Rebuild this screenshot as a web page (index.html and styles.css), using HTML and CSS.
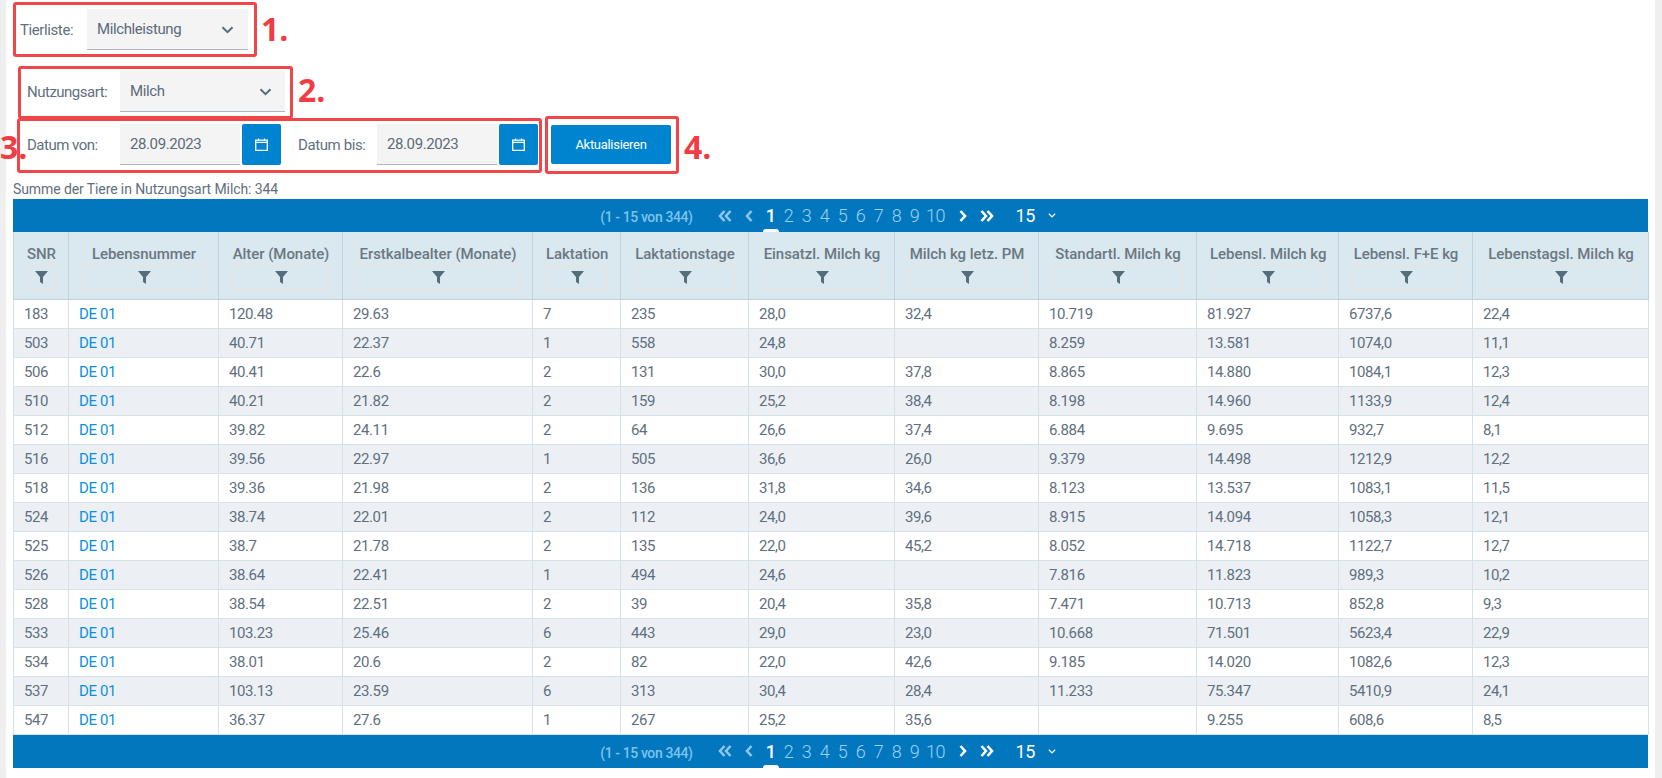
FILE: index.html
```html
<!DOCTYPE html>
<html lang="de">
<head>
    <meta charset="UTF-8">
    <meta name="viewport" content="width=device-width, initial-scale=1.0">
    <title>Tierliste</title>
    <link rel="stylesheet" href="styles.css">
</head>
<body>
    <svg class="sprites" width="0" height="0">
        <symbol id="i-down" viewBox="0 0 12 8"><path d="M1 1.2 6 6.2 11 1.2" fill="none" stroke="currentColor" stroke-width="2"/></symbol>
        <symbol id="i-cal" viewBox="0 0 13 13"><path d="M.7 2.200h11.600v10.100H.7z M.7 4.400h11.600" fill="none" stroke="currentColor" stroke-width="1.300"/><path d="M3.500 .4v2.600 M9.500 .4v2.600" fill="none" stroke="currentColor" stroke-width="1.200"/></symbol>
        <symbol id="i-filter" viewBox="0 0 13 13"><path d="M0 0h13L8 6v7L5 11V6z" fill="currentColor"/></symbol>
        <symbol id="i-first" viewBox="0 0 14 12"><path d="M6.5 1 2 6l4.500 5 M12.500 1 8 6l4.500 5" fill="none" stroke="currentColor" stroke-width="2.600"/></symbol>
        <symbol id="i-prev" viewBox="0 0 8 12"><path d="M6.500 1 2 6l4.500 5" fill="none" stroke="currentColor" stroke-width="2.600"/></symbol>
        <symbol id="i-next" viewBox="0 0 8 12"><path d="M1.500 1 6 6l-4.500 5" fill="none" stroke="currentColor" stroke-width="2.600"/></symbol>
        <symbol id="i-last" viewBox="0 0 14 12"><path d="M1.500 1 6 6l-4.500 5 M7.500 1 12 6l-4.500 5" fill="none" stroke="currentColor" stroke-width="2.600"/></symbol>
    </svg>

    <div class="panel">
        <form class="filters">
            <div class="row row-list">
                <label class="lbl lbl-list">Tierliste:</label>
                <div class="select select-list"><span>Milchleistung</span><svg class="chev"><use href="#i-down"/></svg></div>
            </div>
            <div class="row row-use">
                <label class="lbl lbl-use">Nutzungsart:</label>
                <div class="select select-use"><span>Milch</span><svg class="chev"><use href="#i-down"/></svg></div>
            </div>
            <div class="row row-date">
                <label class="lbl lbl-use">Datum von:</label>
                <div class="date-input">28.09.2023</div>
                <button type="button" class="cal-btn"><svg class="cal"><use href="#i-cal"/></svg></button>
                <label class="lbl lbl-bis">Datum bis:</label>
                <div class="date-input">28.09.2023</div>
                <button type="button" class="cal-btn"><svg class="cal"><use href="#i-cal"/></svg></button>
                <button type="button" class="update-btn">Aktualisieren</button>
            </div>
        </form>

        <div class="summary">Summe der Tiere in Nutzungsart Milch: 344</div>

        <div class="datatable">
            <div class="pager">
                <span class="pager-info">(1 - 15 von 344)</span>
                <svg class="pg-icon pg-first"><use href="#i-first"/></svg>
                <svg class="pg-icon pg-prev"><use href="#i-prev"/></svg>
                <a class="page active">1</a><a class="page">2</a><a class="page">3</a><a class="page">4</a><a class="page">5</a><a class="page">6</a><a class="page">7</a><a class="page">8</a><a class="page">9</a><a class="page page-wide">10</a>
                <svg class="pg-icon pg-next"><use href="#i-next"/></svg>
                <svg class="pg-icon pg-last"><use href="#i-last"/></svg>
                <span class="pg-size">15</span>
                <svg class="pg-chev"><use href="#i-down"/></svg>
            </div>

            <table>
                <colgroup>
                    <col class="c1"><col class="c2"><col class="c3"><col class="c4"><col class="c5"><col class="c6"><col class="c7"><col class="c8"><col class="c9"><col class="c10"><col class="c11"><col class="c12">
                </colgroup>
                <thead>
                    <tr>
                        <th>SNR<span class="filter"><svg><use href="#i-filter"/></svg></span></th>
                        <th>Lebensnummer<span class="filter"><svg><use href="#i-filter"/></svg></span></th>
                        <th>Alter (Monate)<span class="filter"><svg><use href="#i-filter"/></svg></span></th>
                        <th>Erstkalbealter (Monate)<span class="filter"><svg><use href="#i-filter"/></svg></span></th>
                        <th>Laktation<span class="filter"><svg><use href="#i-filter"/></svg></span></th>
                        <th>Laktationstage<span class="filter"><svg><use href="#i-filter"/></svg></span></th>
                        <th>Einsatzl. Milch kg<span class="filter"><svg><use href="#i-filter"/></svg></span></th>
                        <th>Milch kg letz. PM<span class="filter"><svg><use href="#i-filter"/></svg></span></th>
                        <th>Standartl. Milch kg<span class="filter"><svg><use href="#i-filter"/></svg></span></th>
                        <th>Lebensl. Milch kg<span class="filter"><svg><use href="#i-filter"/></svg></span></th>
                        <th>Lebensl. F+E kg<span class="filter"><svg><use href="#i-filter"/></svg></span></th>
                        <th>Lebenstagsl. Milch kg<span class="filter"><svg><use href="#i-filter"/></svg></span></th>
                    </tr>
                </thead>
                <tbody>
                    <tr><td>183</td><td><a>DE 01</a></td><td>120.48</td><td>29.63</td><td>7</td><td>235</td><td>28,0</td><td>32,4</td><td>10.719</td><td>81.927</td><td>6737,6</td><td>22,4</td></tr>
                    <tr><td>503</td><td><a>DE 01</a></td><td>40.71</td><td>22.37</td><td>1</td><td>558</td><td>24,8</td><td></td><td>8.259</td><td>13.581</td><td>1074,0</td><td>11,1</td></tr>
                    <tr><td>506</td><td><a>DE 01</a></td><td>40.41</td><td>22.6</td><td>2</td><td>131</td><td>30,0</td><td>37,8</td><td>8.865</td><td>14.880</td><td>1084,1</td><td>12,3</td></tr>
                    <tr><td>510</td><td><a>DE 01</a></td><td>40.21</td><td>21.82</td><td>2</td><td>159</td><td>25,2</td><td>38,4</td><td>8.198</td><td>14.960</td><td>1133,9</td><td>12,4</td></tr>
                    <tr><td>512</td><td><a>DE 01</a></td><td>39.82</td><td>24.11</td><td>2</td><td>64</td><td>26,6</td><td>37,4</td><td>6.884</td><td>9.695</td><td>932,7</td><td>8,1</td></tr>
                    <tr><td>516</td><td><a>DE 01</a></td><td>39.56</td><td>22.97</td><td>1</td><td>505</td><td>36,6</td><td>26,0</td><td>9.379</td><td>14.498</td><td>1212,9</td><td>12,2</td></tr>
                    <tr><td>518</td><td><a>DE 01</a></td><td>39.36</td><td>21.98</td><td>2</td><td>136</td><td>31,8</td><td>34,6</td><td>8.123</td><td>13.537</td><td>1083,1</td><td>11,5</td></tr>
                    <tr><td>524</td><td><a>DE 01</a></td><td>38.74</td><td>22.01</td><td>2</td><td>112</td><td>24,0</td><td>39,6</td><td>8.915</td><td>14.094</td><td>1058,3</td><td>12,1</td></tr>
                    <tr><td>525</td><td><a>DE 01</a></td><td>38.7</td><td>21.78</td><td>2</td><td>135</td><td>22,0</td><td>45,2</td><td>8.052</td><td>14.718</td><td>1122,7</td><td>12,7</td></tr>
                    <tr><td>526</td><td><a>DE 01</a></td><td>38.64</td><td>22.41</td><td>1</td><td>494</td><td>24,6</td><td></td><td>7.816</td><td>11.823</td><td>989,3</td><td>10,2</td></tr>
                    <tr><td>528</td><td><a>DE 01</a></td><td>38.54</td><td>22.51</td><td>2</td><td>39</td><td>20,4</td><td>35,8</td><td>7.471</td><td>10.713</td><td>852,8</td><td>9,3</td></tr>
                    <tr><td>533</td><td><a>DE 01</a></td><td>103.23</td><td>25.46</td><td>6</td><td>443</td><td>29,0</td><td>23,0</td><td>10.668</td><td>71.501</td><td>5623,4</td><td>22,9</td></tr>
                    <tr><td>534</td><td><a>DE 01</a></td><td>38.01</td><td>20.6</td><td>2</td><td>82</td><td>22,0</td><td>42,6</td><td>9.185</td><td>14.020</td><td>1082,6</td><td>12,3</td></tr>
                    <tr><td>537</td><td><a>DE 01</a></td><td>103.13</td><td>23.59</td><td>6</td><td>313</td><td>30,4</td><td>28,4</td><td>11.233</td><td>75.347</td><td>5410,9</td><td>24,1</td></tr>
                    <tr><td>547</td><td><a>DE 01</a></td><td>36.37</td><td>27.6</td><td>1</td><td>267</td><td>25,2</td><td>35,6</td><td></td><td>9.255</td><td>608,6</td><td>8,5</td></tr>
                </tbody>
            </table>

            <div class="pager">
                <span class="pager-info">(1 - 15 von 344)</span>
                <svg class="pg-icon pg-first"><use href="#i-first"/></svg>
                <svg class="pg-icon pg-prev"><use href="#i-prev"/></svg>
                <a class="page active">1</a><a class="page">2</a><a class="page">3</a><a class="page">4</a><a class="page">5</a><a class="page">6</a><a class="page">7</a><a class="page">8</a><a class="page">9</a><a class="page page-wide">10</a>
                <svg class="pg-icon pg-next"><use href="#i-next"/></svg>
                <svg class="pg-icon pg-last"><use href="#i-last"/></svg>
                <span class="pg-size">15</span>
                <svg class="pg-chev"><use href="#i-down"/></svg>
            </div>
        </div>
    </div>

    <!-- red markup drawn over the screenshot -->
    <div class="mark mark-1"></div>
    <div class="mark mark-2"></div>
    <div class="mark mark-3"></div>
    <div class="mark mark-4"></div>
    <span class="num num-1">1.</span>
    <span class="num num-2">2.</span>
    <span class="num num-3">3.</span>
    <span class="num num-4">4.</span>
</body>
</html>
```

FILE: styles.css
```css
body {
    position: relative;
    margin: 0;
    height: 778px;
    overflow: hidden;
    background-color: #efefef;
    font-family: 'Roboto', sans-serif;
    font-size: 15px;
    letter-spacing: -0.4px;
    color: #5f6f7e;
}
.sprites {
    position: absolute;
}
.panel {
    margin: 0 7px 0 6px;
    height: 778px;
    background-color: #fff;
    overflow: hidden;
}
.filters {
    padding-top: 9px;
}
.row {
    display: flex;
    align-items: center;
    height: 41px;
}
.row-use {
    margin-top: 21px;
}
.row-date {
    margin-top: 12px;
}
.lbl-list {
    width: 67px;
    margin-left: 14px;
}
.lbl-use {
    width: 93px;
    margin-left: 21px;
    letter-spacing: -0.5px;
}
.lbl-bis {
    width: 79px;
    margin-left: 17px;
}
.select, .date-input {
    display: flex;
    align-items: center;
    justify-content: space-between;
    box-sizing: border-box;
    height: 41px;
    background-color: #f4f4f4;
    border-bottom: 1px solid #a9b7c2;
    padding: 0 13px 0 10px;
    color: #5b6b7a;
}
.select-list {
    width: 161px;
    padding-right: 14px;
}
.select-use {
    width: 165px;
}
.date-input {
    width: 120px;
}
.chev {
    width: 13px;
    height: 8px;
    margin-top: 2px;
    color: #546e7a;
}
.cal-btn {
    display: flex;
    align-items: center;
    justify-content: center;
    width: 39px;
    height: 41px;
    margin-left: 2px;
    padding: 0;
    border: none;
    border-radius: 2px;
    background-color: #0084cf;
    color: #fff;
}
.cal {
    width: 13px;
    height: 13px;
}
.update-btn {
    width: 120px;
    height: 39px;
    margin-left: 13px;
    border: none;
    border-radius: 2px;
    background-color: #0084cf;
    color: #fff;
    font-family: 'Roboto', sans-serif;
    font-size: 13px;
    letter-spacing: -0.3px;
}
.summary {
    height: 34px;
    box-sizing: border-box;
    padding: 16px 0 0 7px;
    font-size: 14px;
    letter-spacing: -0.1px;
    line-height: 16px;
}
.datatable {
    width: 1635px;
    margin-left: 7px;
}
.pager {
    display: flex;
    align-items: center;
    justify-content: center;
    height: 33px;
    background-color: #0277bd;
    color: #9ad2f3;
}
.pager-info {
    font-size: 14px;
    font-weight: 500;
    letter-spacing: -0.4px;
    margin-right: 25px;
    padding-top: 3px;
    color: #7cc3ec;
}
.pg-icon {
    height: 12px;
    color: #8fc6e8;
}
.pg-first, .pg-last {
    width: 14px;
}
.pg-prev, .pg-next {
    width: 8px;
}
.pg-prev {
    margin: 0 9px 0 13px;
}
.pg-next {
    margin: 0 13px 0 11px;
    color: #fff;
}
.pg-last {
    color: #fff;
}
.page {
    position: relative;
    width: 18px;
    font-size: 18px;
    font-weight: 300;
    letter-spacing: -0.5px;
    line-height: 33px;
    text-align: center;
}
.page-wide {
    width: 24px;
}
.page.active {
    color: #fff;
    font-weight: 500;
}
.page.active::after {
    content: "";
    position: absolute;
    left: 1px;
    bottom: 0;
    width: 16px;
    height: 3px;
    background-color: #fff;
    border-radius: 6px 6px 0 0;
}
.pg-size {
    margin-left: 22px;
    font-size: 18px;
    letter-spacing: -0.5px;
    color: #fff;
}
.pg-chev {
    width: 8px;
    height: 5px;
    margin: 0 5px 0 13px;
    color: #fff;
}
table {
    width: 1635px;
    table-layout: fixed;
    border-collapse: collapse;
}
.c1 { width: 55px; }
.c2 { width: 150px; }
.c3 { width: 124px; }
.c4 { width: 190px; }
.c5 { width: 88px; }
.c6 { width: 128px; }
.c7 { width: 146px; }
.c8 { width: 144px; }
.c9 { width: 158px; }
.c10 { width: 142px; }
.c11 { width: 134px; }
.c12 { width: 176px; }
th {
    height: 67px;
    box-sizing: border-box;
    padding: 13px 12px 0 13px;
    background-color: #dae8f0;
    border: 1px solid #c0d4df;
    border-top: none;
    font-size: 15px;
    font-weight: 500;
    letter-spacing: -0.05px;
    line-height: 18px;
    color: #6c7781;
    text-align: center;
    vertical-align: top;
    white-space: nowrap;
}
.filter {
    display: flex;
    align-items: center;
    justify-content: center;
    height: 24px;
    margin-top: 2px;
    border: 1px solid #eae2dc;
    box-sizing: border-box;
    color: #546e7a;
}
.filter svg {
    width: 13px;
    height: 13px;
}
td {
    height: 29px;
    box-sizing: border-box;
    padding: 0 0 0 10px;
    border: 1px solid #d6e2e9;
    color: #5f6f7e;
}
td a {
    color: #0b8fe0;
}
tbody tr:nth-child(even) td {
    background-color: #ecf0f5;
}
.mark {
    position: absolute;
    box-sizing: border-box;
    border: 3px solid #f0464a;
    border-radius: 3px;
}
.mark-1 { left: 13px; top: 2px; width: 244px; height: 55px; }
.mark-2 { left: 18px; top: 66px; width: 275px; height: 53px; }
.mark-3 { left: 17px; top: 118px; width: 525px; height: 55px; }
.mark-4 { left: 545px; top: 116px; width: 134px; height: 58px; }
.num {
    position: absolute;
    font-family: 'Open Sans', sans-serif;
    font-size: 32px;
    font-weight: 700;
    letter-spacing: 0;
    line-height: 36px;
    color: #f03c42;
}
.num-1 { left: 261px; top: 11px; }
.num-2 { left: 298px; top: 72px; }
.num-3 { left: 0; top: 129px; }
.num-4 { left: 684px; top: 129px; }
```
